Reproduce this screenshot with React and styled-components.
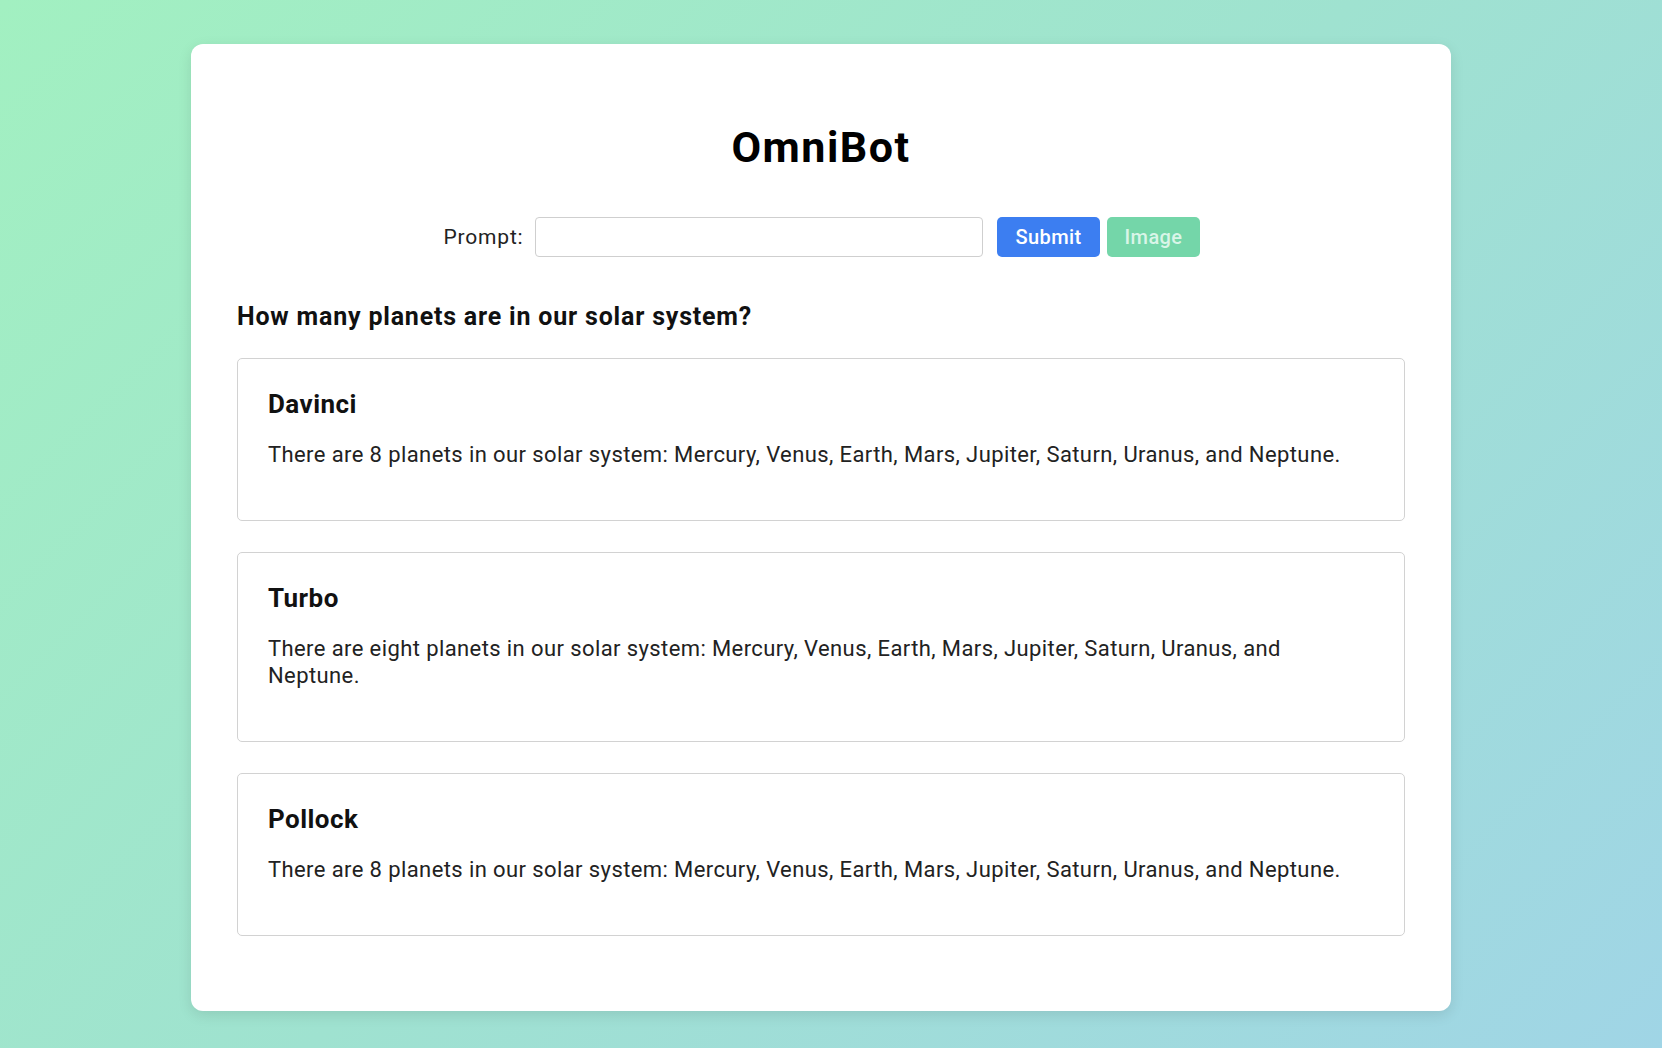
import styled, { createGlobalStyle } from 'styled-components';

const GlobalStyle = createGlobalStyle`
  html, body {
    margin: 0;
    padding: 0;
  }
  body {
    font-family: Roboto, "Liberation Sans", sans-serif;
    color: #1d1d1d;
  }
`

const Page = styled.div`
  min-height: 100vh;
  box-sizing: border-box;
  padding: 44px 20px 38px 0;
  background: linear-gradient(135deg, #a2f0c1 0%, #9fe2d0 50%, #a0d5e6 100%);
  display: flex;
  justify-content: center;
  align-items: flex-start;
`

const Panel = styled.main`
  width: 1260px;
  box-sizing: border-box;
  background: #fff;
  border-radius: 12px;
  box-shadow: 0 4px 14px rgba(0, 0, 0, 0.1);
  padding: 79px 46px 75px;
  display: flex;
  flex-direction: column;
`

const Title = styled.h1`
  margin: 0;
  text-align: center;
  font-size: 43px;
  line-height: 49px;
  letter-spacing: 1.5px;
  font-weight: 700;
  color: #000;
`

const PromptRow = styled.form`
  display: flex;
  justify-content: center;
  align-items: center;
  margin-top: 45px;
  padding-left: 2px;
`

const Label = styled.label`
  font-size: 21px;
  letter-spacing: 0.8px;
  color: #222;
  margin-right: 12px;
`

const PromptInput = styled.input`
  width: 448px;
  height: 40px;
  box-sizing: border-box;
  border: 1px solid #cfcfcf;
  border-radius: 4px;
  padding: 0 10px;
  font: inherit;
  font-size: 18px;
  margin-right: 14px;
  outline: none;
`

const Button = styled.button`
  height: 40px;
  box-sizing: border-box;
  border: none;
  border-radius: 5px;
  padding: 0 18px;
  margin-right: ${props => props.gap || 0}px;
  font-family: Roboto, "Liberation Sans", sans-serif;
  font-size: 20px;
  font-weight: 500;
  letter-spacing: 0.4px;
  background: ${props => props.bg};
  color: ${props => props.fg};
  cursor: pointer;
`

const Question = styled.h2`
  margin: 46px 0 27px;
  font-size: 25px;
  line-height: 28px;
  letter-spacing: 0.8px;
  font-weight: 700;
  color: #111;
`

const Answers = styled.div`
  display: flex;
  flex-direction: column;
  gap: 31px;
`

const AnswerCard = styled.section`
  border: 1px solid #d2d2d2;
  border-radius: 5px;
  padding: 31px 30px 52px;
`

const ModelName = styled.h3`
  margin: 0 0 22px;
  font-size: 26px;
  line-height: 29px;
  letter-spacing: 0.45px;
  font-weight: 700;
  color: #111;
`

const AnswerText = styled.p`
  margin: 0;
  font-size: 22px;
  line-height: 27px;
  letter-spacing: 0.4px;
  color: #222;
`

const answers = [
  {
    model: 'Davinci',
    text: 'There are 8 planets in our solar system: Mercury, Venus, Earth, Mars, Jupiter, Saturn, Uranus, and Neptune.',
  },
  {
    model: 'Turbo',
    text: 'There are eight planets in our solar system: Mercury, Venus, Earth, Mars, Jupiter, Saturn, Uranus, and Neptune.',
  },
  {
    model: 'Pollock',
    text: 'There are 8 planets in our solar system: Mercury, Venus, Earth, Mars, Jupiter, Saturn, Uranus, and Neptune.',
  },
]

function App() {
  return (
    <Page>
      <GlobalStyle />
      <Panel>
        <Title>OmniBot</Title>
        <PromptRow onSubmit={e => e.preventDefault()}>
          <Label htmlFor="prompt">Prompt:</Label>
          <PromptInput id="prompt" type="text" />
          <Button type="submit" bg="#3c7ef1" fg="#fff" gap={7}>Submit</Button>
          <Button type="button" bg="#74d6a9" fg="#d9f5e8">Image</Button>
        </PromptRow>
        <Question>How many planets are in our solar system?</Question>
        <Answers>
          {answers.map(a => (
            <AnswerCard key={a.model}>
              <ModelName>{a.model}</ModelName>
              <AnswerText>{a.text}</AnswerText>
            </AnswerCard>
          ))}
        </Answers>
      </Panel>
    </Page>
  );
}

export default App;
